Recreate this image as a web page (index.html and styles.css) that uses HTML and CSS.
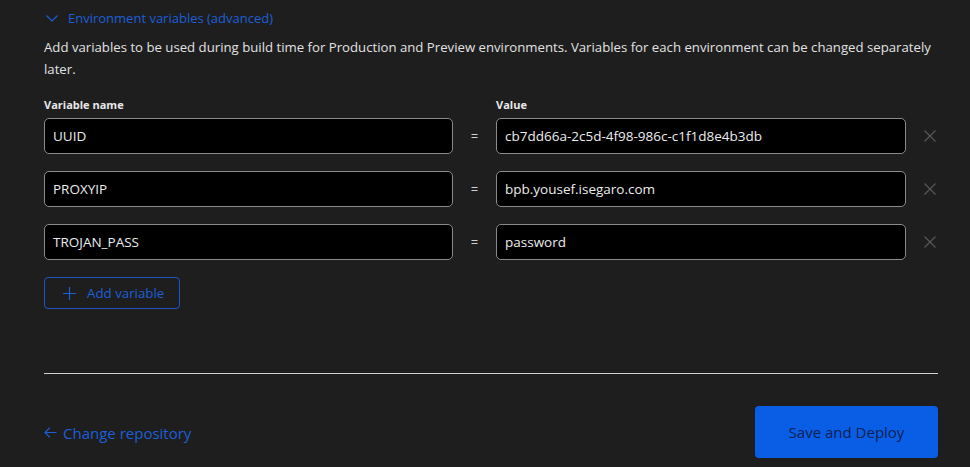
FILE: index.html
```html
<!DOCTYPE html>
<html lang="en">
<head>
<meta charset="utf-8">
<title>Environment variables</title>
<link rel="stylesheet" href="styles.css">
</head>
<body>
<main class="page">
  <section class="env">
    <button class="toggle" type="button">
      <svg class="chev" width="12" height="7" viewBox="0 0 12 7"><path d="M0.5 0.5 L6 6 L11.5 0.5" fill="none" stroke="currentColor" stroke-width="1.2"/></svg>
      <span>Environment variables (advanced)</span>
    </button>
    <p class="desc">Add variables to be used during build time for Production and Preview environments. Variables for each environment can be changed separately later.</p>

    <div class="labels">
      <div class="label">Variable name</div>
      <div></div>
      <div class="label">Value</div>
      <div></div>
    </div>

    <div class="grid">
      <div class="field">UUID</div>
      <div class="eq">=</div>
      <div class="field">cb7dd66a-2c5d-4f98-986c-c1f1d8e4b3db</div>
      <div class="remove"><svg width="12" height="12" viewBox="0 0 12 12"><path d="M0.5 0.5 L11.5 11.5 M11.5 0.5 L0.5 11.5" stroke="currentColor" stroke-width="1.1"/></svg></div>

      <div class="field">PROXYIP</div>
      <div class="eq">=</div>
      <div class="field">bpb.yousef.isegaro.com</div>
      <div class="remove"><svg width="12" height="12" viewBox="0 0 12 12"><path d="M0.5 0.5 L11.5 11.5 M11.5 0.5 L0.5 11.5" stroke="currentColor" stroke-width="1.1"/></svg></div>

      <div class="field">TROJAN_PASS</div>
      <div class="eq">=</div>
      <div class="field">password</div>
      <div class="remove"><svg width="12" height="12" viewBox="0 0 12 12"><path d="M0.5 0.5 L11.5 11.5 M11.5 0.5 L0.5 11.5" stroke="currentColor" stroke-width="1.1"/></svg></div>
    </div>

    <button class="add" type="button">
      <svg width="13" height="13" viewBox="0 0 13 13"><path d="M6.5 0 V13 M0 6.5 H13" stroke="currentColor" stroke-width="1.2"/></svg>
      <span>Add variable</span>
    </button>
  </section>

  <hr class="divider">

  <footer class="footer">
    <a class="back" href="#">
      <svg width="13" height="11" viewBox="0 0 13 11"><path d="M12.5 5.5 H1 M5.8 0.7 L1 5.5 L5.8 10.3" fill="none" stroke="currentColor" stroke-width="1.2"/></svg>
      <span>Change repository</span>
    </a>
    <button class="deploy" type="button">Save and Deploy</button>
  </footer>
</main>
</body>
</html>
```

FILE: styles.css
```css
* { box-sizing: border-box; }

html, body {
  margin: 0;
  background: #1e1e1e;
}

body {
  font-family: "Open Sans", "Noto Sans", sans-serif;
  color: #e6e6e6;
  font-size: 13px;
}

.page {
  padding: 8px 32px 0 44px;
}

.toggle {
  display: flex;
  align-items: center;
  gap: 10px;
  background: none;
  border: 0;
  padding: 0 0 0 2px;
  height: 20px;
  color: #1d5fd8;
  font: inherit;
  font-size: 13px;
}

.chev { margin-top: 1px; }

.desc {
  margin: 8px 0 0;
  line-height: 22px;
  color: #e2e2e2;
  font-size: 13.2px;
}

.labels,
.grid {
  display: grid;
  grid-template-columns: 409px 43px 410px 32px;
}

.labels {
  margin-top: 18px;
  height: 14px;
}

.label {
  font-size: 11px;
  font-weight: 700;
  color: #e8e8e8;
  line-height: 14px;
}

.grid {
  grid-auto-rows: 36px;
  row-gap: 17px;
  margin-top: 6px;
}

.field {
  background: #000;
  border: 1px solid #8a8a8a;
  border-radius: 5px;
  display: flex;
  align-items: center;
  padding: 0 8px;
  color: #ececec;
  font-size: 13.5px;
}

.eq {
  display: flex;
  align-items: center;
  justify-content: center;
  color: #d0d0d0;
}

.remove {
  display: flex;
  align-items: center;
  justify-content: flex-end;
  padding-right: 2px;
  color: #5a5a5a;
}

.add {
  margin-top: 17px;
  display: flex;
  align-items: center;
  gap: 11px;
  height: 32px;
  width: 136px;
  padding: 0 0 0 18px;
  background: transparent;
  border: 1px solid #1d55c4;
  border-radius: 4px;
  color: #1d5fd8;
  font: inherit;
  font-size: 13.3px;
}

.divider {
  margin: 64px 0 0;
  border: 0;
  border-top: 1px solid #cfcfcf;
  height: 0;
}

.footer {
  display: flex;
  justify-content: space-between;
  align-items: center;
  margin-top: 32px;
}

.back {
  display: flex;
  align-items: center;
  gap: 6px;
  color: #1d5fd8;
  text-decoration: none;
  font-size: 15px;
  margin-top: 1px;
}

.deploy {
  width: 183px;
  height: 52px;
  border: 0;
  border-radius: 4px;
  background: #0a5ee6;
  color: #0b2151;
  font: inherit;
  font-size: 15px;
}
```
